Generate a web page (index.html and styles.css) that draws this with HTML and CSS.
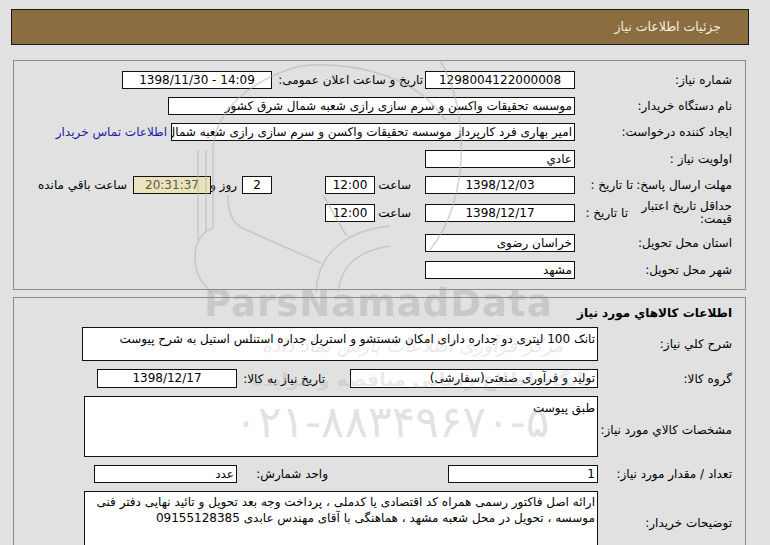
FILE: index.html
```html
<!DOCTYPE html>
<html lang="fa" dir="rtl">
<head>
<meta charset="utf-8">
<title>جزئیات اطلاعات نیاز</title>
<link rel="stylesheet" href="styles.css">
</head>
<body>
<div class="page">
  <div class="hdr">جزئیات اطلاعات نیاز</div>

  <div class="sec s1">
    <div class="row h26">
      <div class="lbl">شماره نیاز:</div>
      <div class="box w150 c">1298004122000008</div>
      <div class="lbl-mid">تاریخ و ساعت اعلان عمومی:</div>
      <div class="box w150 c ltr">1398/11/30 - 14:09</div>
    </div>
    <div class="row h26">
      <div class="lbl">نام دستگاه خریدار:</div>
      <div class="box w407">موسسه تحقیقات واکسن و سرم سازی رازی شعبه شمال شرق کشور</div>
    </div>
    <div class="row h26">
      <div class="lbl">ایجاد کننده درخواست:</div>
      <div class="box w404">امیر بهاری فرد کارپرداز موسسه تحقیقات واکسن و سرم سازی رازی شعبه شمال شرق کشور</div>
      <a class="link" href="#">اطلاعات تماس خریدار</a>
    </div>
    <div class="row h28">
      <div class="lbl">اولویت نیاز :</div>
      <div class="box w150">عادي</div>
    </div>
    <div class="row h24">
      <div class="lbl-main">مهلت ارسال پاسخ:</div>
      <div class="lbl-sub">تا تاریخ :</div>
      <div class="box w150 c">1398/12/03</div>
      <div class="lbl-hour">ساعت</div>
      <div class="box w50 c">12:00</div>
      <div class="spacer"></div>
      <div class="box w30 c">2</div>
      <div class="lbl-day">روز و</div>
      <div class="box w78 c remain">20:31:37</div>
      <div class="lbl-left">ساعت باقي مانده</div>
    </div>
    <div class="row h32">
      <div class="lbl-main wrap">حداقل تاریخ اعتبار قیمت:</div>
      <div class="lbl-sub sub2">تا تاریخ :</div>
      <div class="box w150 c">1398/12/17</div>
      <div class="lbl-hour">ساعت</div>
      <div class="box w50 c">12:00</div>
    </div>
    <div class="row h28">
      <div class="lbl">استان محل تحویل:</div>
      <div class="box w150">خراسان رضوی</div>
    </div>
    <div class="row h26">
      <div class="lbl">شهر محل تحویل:</div>
      <div class="box w150">مشهد</div>
    </div>
  </div>

  <div class="sec s2">
    <div class="title">اطلاعات کالاهاي مورد نیاز</div>
    <div class="row2">
      <div class="lbl2">شرح کلي نیاز:</div>
      <div class="box area w516 h34">تانک 100 لیتری دو جداره دارای امکان شستشو و استریل جداره استنلس استیل به شرح پیوست</div>
    </div>
    <div class="row2">
      <div class="lbl2">گروه کالا:</div>
      <div class="box w248 h19">تولید و فرآوری صنعتی(سفارشی)</div>
      <div class="lbl-need">تاریخ نیاز به کالا:</div>
      <div class="box w140 h19 c">1398/12/17</div>
    </div>
    <div class="row2">
      <div class="lbl2 down">مشخصات کالاي مورد نیاز:</div>
      <div class="box area w514 h61">طبق پیوست</div>
    </div>
    <div class="row2">
      <div class="lbl2">تعداد / مقدار مورد نیاز:</div>
      <div class="box w150 h18">1</div>
      <div class="lbl-unit">واحد شمارش:</div>
      <div class="box w143 h18">عدد</div>
    </div>
    <div class="row2">
      <div class="lbl2">توضیحات خریدار:</div>
      <div class="box area notes w514 h64">ارائه اصل فاکتور رسمی همراه کد اقتصادی یا کدملی ، پرداخت وجه بعد تحویل و تائید نهایی دفتر فنی<br>موسسه ، تحویل در محل شعبه مشهد ، هماهنگی با آقای مهندس عابدی 09155128385</div>
    </div>
  </div>

  <div class="wm" aria-hidden="true">
    <svg class="wm-logo" width="770" height="545" viewBox="0 0 770 545">
      <g fill="none" stroke="#b4b4b4" stroke-width="1.6" opacity="0.55">
        <path d="M198 150 L198 240"/>
        <path d="M206 150 L206 232"/>
        <path d="M213 150 L213 228"/>
        <path d="M213 150 C215 110 250 80 300 66"/>
        <path d="M228 195 C228 212 232 222 242 228"/>
        <path d="M242 228 L321 263"/>
        <path d="M213 228 C190 235 188 275 212 292"/>
        <path d="M323 195 L346 235"/>
        <path d="M316 292 C318 250 350 230 390 226"/>
        <path d="M338 292 C342 262 362 250 390 246"/>
        <path d="M300 66 C360 60 420 80 445 120"/>
        <path d="M440 60 C470 110 470 200 430 250"/>
      </g>
    </svg>
    <div class="wm-brand">ParsNamadData</div>
    <div class="wm-fa1">مرکز فرآوری اطلاعات پارس نماد داده</div>
    <div class="wm-fa2">پایگاه اطلاع رسانی مناقصه و مزایده</div>
    <div class="wm-phone">۰۲۱-۸۸۳۴۹۶۷۰-۵</div>
  </div>
</div>
</body>
</html>
```

FILE: styles.css
```css
html, body {
  margin: 0;
  padding: 0;
  background: #e1e1e1;
}
body {
  width: 770px;
  height: 545px;
  overflow: hidden;
  font-family: "DejaVu Sans", "Noto Sans", sans-serif;
  font-size: 12px;
  color: #000;
  direction: rtl;
}
.page {
  position: relative;
  padding-top: 9px;
  height: 536px;
}
.hdr {
  margin: 0 21px 0 11px;
  height: 36px;
  box-sizing: border-box;
  background: #8c6d40;
  border: 1px solid #1a1a1a;
  color: #f4eee2;
  font-size: 12.5px;
  line-height: 34px;
  padding-right: 27px;
}
.sec {
  margin: 0 24px 0 13px;
  border: 1px solid #8a8a8a;
  box-sizing: border-box;
  padding-right: 13px;
}
.s1 {
  margin-top: 15px;
  height: 230px;
  padding-top: 6px;
}
.s2 {
  margin-top: 7px;
  height: 260px;
}
.row {
  display: flex;
  align-items: center;
}
.h24 { height: 24px; }
.h26 { height: 26px; }
.h28 { height: 28px; }
.h32 { height: 32px; }
.box {
  box-sizing: border-box;
  height: 18px;
  border: 1px solid #111;
  background: #fff;
  line-height: 16px;
  padding: 0 2px;
  white-space: nowrap;
  overflow: hidden;
  flex: none;
  text-align: right;
}
.box.c { text-align: center; }
.box.ltr { direction: ltr; }
.w30 { width: 30px; }
.w50 { width: 50px; }
.w78 { width: 78px; }
.w140 { width: 140px; }
.w143 { width: 143px; }
.w150 { width: 150px; }
.w248 { width: 248px; }
.w404 { width: 404px; }
.w407 { width: 407px; }
.w514 { width: 514px; }
.w516 { width: 516px; }
.h18 { height: 18px; }
.h19 { height: 19px; }
.h34 { height: 34px; }
.h61 { height: 61px; }
.h64 { height: 64px; }
.remain {
  background: #ebe3bb;
  color: #5a5a4a;
}
.lbl {
  width: 157px;
  flex: none;
}
.lbl-mid {
  width: 153px;
  flex: none;
  padding-right: 2px;
  box-sizing: border-box;
}
.link {
  margin-right: 4px;
  color: #1a1aa6;
  text-decoration: none;
  white-space: nowrap;
}
.lbl-main {
  width: 95px;
  flex: none;
  white-space: nowrap;
}
.lbl-main.wrap {
  white-space: normal;
  line-height: 13px;
}
.lbl-sub {
  width: 62px;
  flex: none;
  box-sizing: border-box;
  padding-right: 4px;
  white-space: nowrap;
}
.lbl-sub.sub2 {
  padding-right: 9px;
}
.lbl-hour {
  width: 50px;
  flex: none;
  box-sizing: border-box;
  padding-right: 14px;
}
.spacer {
  width: 53px;
  flex: none;
}
.lbl-day {
  width: 31px;
  flex: none;
  box-sizing: border-box;
  padding-right: 5px;
  white-space: nowrap;
}
.lbl-left {
  padding-right: 6px;
  white-space: nowrap;
}
.title {
  font-weight: bold;
  line-height: 16px;
  padding-top: 7px;
  margin-bottom: 6px;
}
.row2 {
  display: flex;
  align-items: center;
  margin-bottom: 8px;
}
.lbl2 {
  width: 134px;
  flex: none;
  white-space: nowrap;
}
.lbl2.down {
  position: relative;
  top: 3px;
}
.box.area {
  white-space: normal;
  padding: 3px 2px 0 2px;
  text-align: right;
}
.box.notes {
  padding-top: 2px;
}
.lbl-need {
  width: 113px;
  flex: none;
  box-sizing: border-box;
  padding-right: 25px;
  white-space: nowrap;
}
.lbl-unit {
  width: 211px;
  flex: none;
  box-sizing: border-box;
  padding-right: 120px;
  white-space: nowrap;
}
.wm {
  position: absolute;
  left: 0;
  top: 0;
  width: 770px;
  height: 545px;
  pointer-events: none;
  direction: ltr;
}
.wm-logo {
  position: absolute;
  left: 0;
  top: 0;
}
.wm-brand {
  position: absolute;
  left: 204px;
  top: 282px;
  font-family: "DejaVu Sans", sans-serif;
  font-weight: bold;
  font-size: 37px;
  letter-spacing: 1px;
  color: rgba(140, 140, 140, 0.3);
}
.wm-fa1 {
  position: absolute;
  left: 262px;
  top: 334px;
  font-size: 19px;
  font-style: italic;
  color: rgba(140, 140, 140, 0.2);
  direction: rtl;
  white-space: nowrap;
}
.wm-fa2 {
  position: absolute;
  left: 252px;
  top: 368px;
  font-size: 19px;
  font-weight: bold;
  color: rgba(140, 140, 140, 0.2);
  direction: rtl;
  white-space: nowrap;
}
.wm-phone {
  position: absolute;
  left: 234px;
  top: 396px;
  font-size: 44px;
  color: rgba(140, 140, 140, 0.25);
  direction: ltr;
  white-space: nowrap;
}
```
